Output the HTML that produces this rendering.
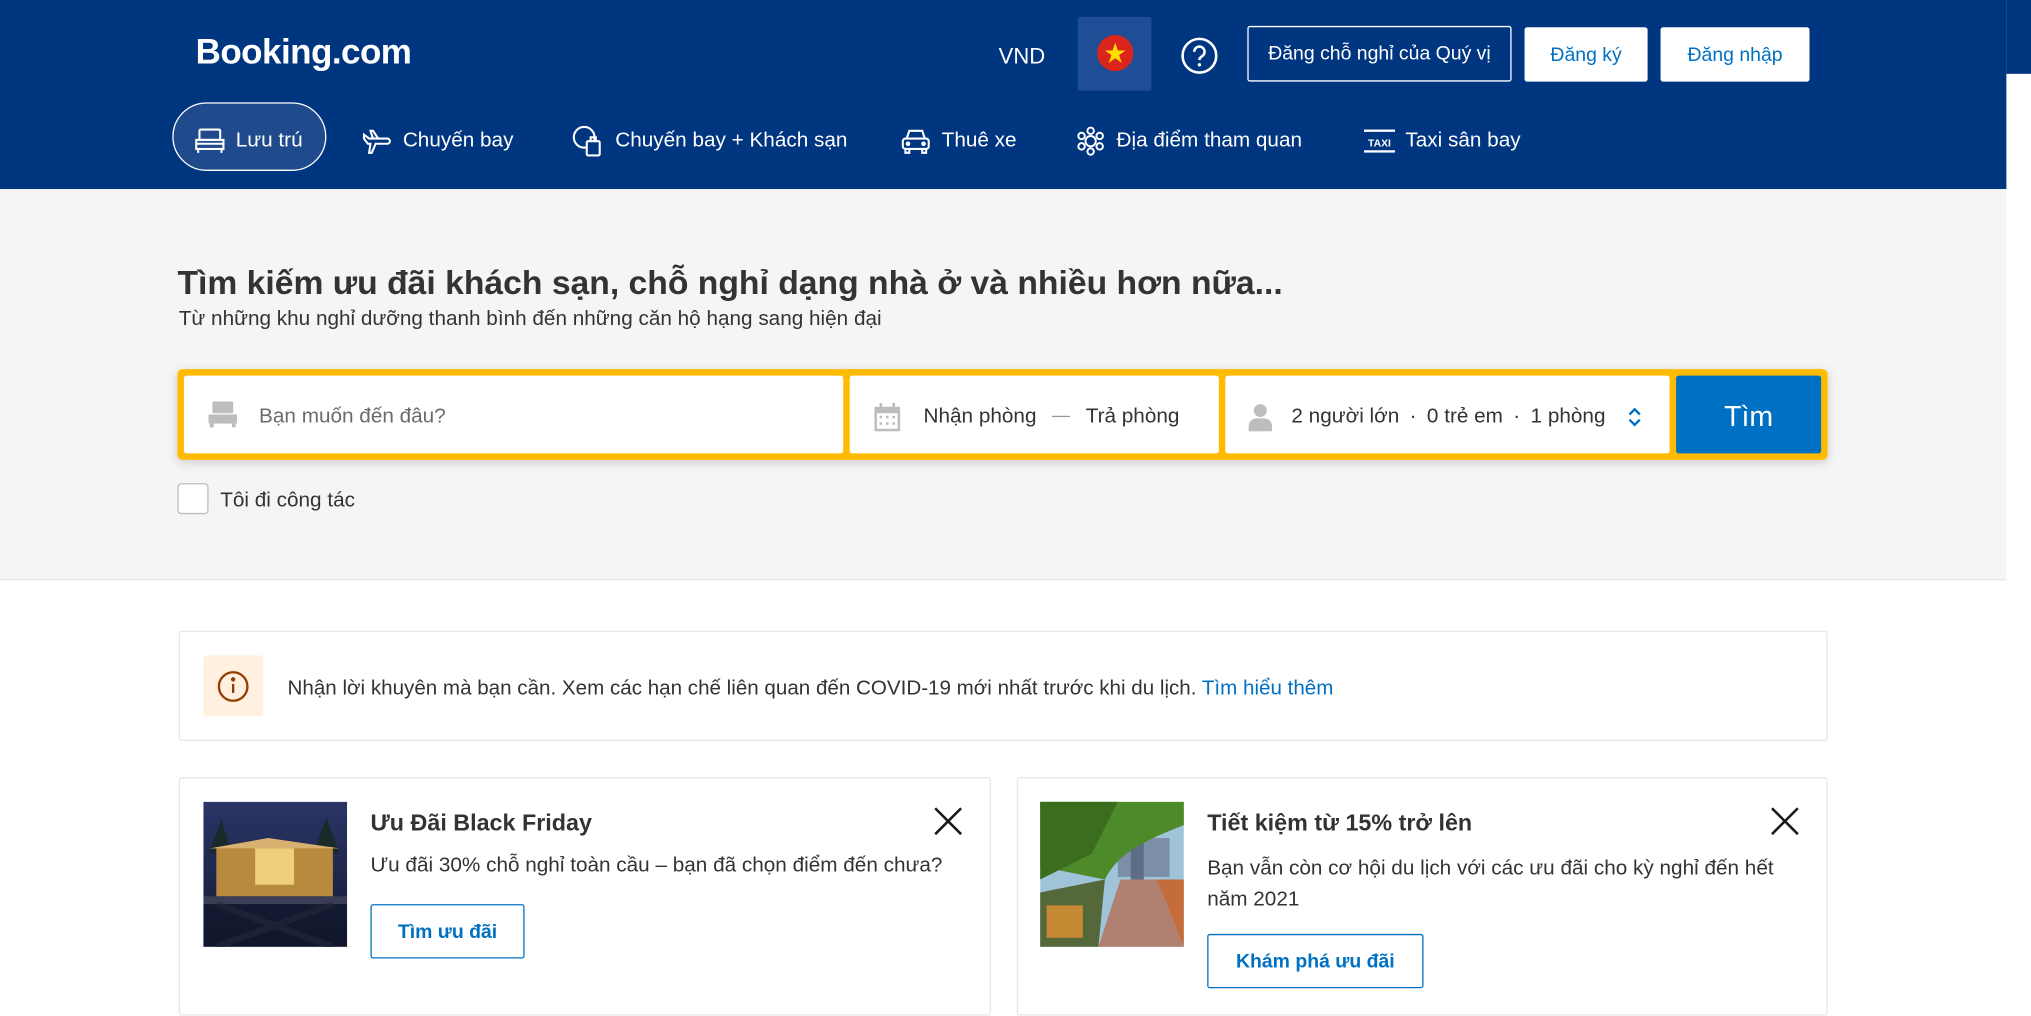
<!DOCTYPE html>
<html><head><meta charset="utf-8">
<style>
html,body{margin:0;padding:0;width:2031px;height:1015px;overflow:hidden;background:#fff}
#w{position:absolute;left:0;top:0;width:1568px;height:784px;transform:scale(1.29528);transform-origin:0 0;font-family:"Liberation Sans",sans-serif;color:#333}
.a{position:absolute}
.hdr{left:0;top:0;width:1549px;height:146px;background:#003580}
.strip{left:1549px;top:0;width:19px;height:57px;background:#003580}
.wt{color:#fff}
.btn{position:absolute;box-sizing:border-box;display:flex;align-items:center;justify-content:center;font-size:15px}
.nav{position:absolute;top:97px;height:24px;display:flex;align-items:center;color:#fff;font-size:16px}
.nav svg{margin-right:8px}
.fld{position:absolute;top:291px;height:60px;background:#fff;border-radius:2px;display:flex;align-items:center;font-size:16px}
.card{position:absolute;border:1px solid #e7e7e7;border-radius:2px;box-sizing:border-box;background:#fff}
.ob{position:absolute;border:1px solid #0071c2;border-radius:2px;box-sizing:border-box;color:#0071c2;font-weight:bold;font-size:15px;display:flex;align-items:center;justify-content:center}
</style></head><body><div id="w">
<div class="a hdr"></div><div class="a strip"></div>
<div class="a wt" style="left:151px;top:25px;font-size:27px;font-weight:bold;letter-spacing:-0.4px">Booking.com</div>
<div class="a wt" style="left:771px;top:34px;font-size:17px">VND</div>
<div class="a" style="left:832px;top:13px;width:57px;height:57px;background:#1f4e96;border-radius:2px"></div>
<svg class="a" style="left:847px;top:27px" width="28" height="28" viewBox="0 0 28 28"><circle cx="14" cy="14" r="14" fill="#da251d"/><polygon points="14,6 16,12 22,12 17,15.5 19,21.5 14,18 9,21.5 11,15.5 6,12 12,12" fill="#ffde00"/></svg>
<svg class="a" style="left:911px;top:28px" width="30" height="30" viewBox="0 0 30 30"><circle cx="15" cy="15" r="13" fill="none" stroke="#fff" stroke-width="2"/><path d="M11 12a4 4 0 1 1 6 3.4c-1.3.8-2 1.5-2 3" fill="none" stroke="#fff" stroke-width="2"/><circle cx="15" cy="22" r="1.3" fill="#fff"/></svg>
<div class="btn wt" style="left:963px;top:20px;width:204px;height:43px;border:1px solid #fff;border-radius:2px">Đăng chỗ nghỉ của Quý vị</div>
<div class="btn" style="left:1177px;top:21px;width:95px;height:42px;background:#fff;color:#0071c2;border-radius:2px">Đăng ký</div>
<div class="btn" style="left:1282px;top:21px;width:115px;height:42px;background:#fff;color:#0071c2;border-radius:2px">Đăng nhập</div>
<div class="a" style="left:133px;top:79px;width:119px;height:53px;box-sizing:border-box;border:1px solid #fff;border-radius:27px;background:#1f4a8c"></div>
<div class="nav" style="left:150px"><svg width="24" height="22" viewBox="0 0 24 22" fill="none" stroke="#fff" stroke-width="1.6"><rect x="4" y="2" width="16" height="8" rx="1"/><rect x="1.5" y="10" width="21" height="7"/><path d="M3 17v3M21 17v3M1.5 13h21"/></svg>Lưu trú</div>
<div class="nav" style="left:279px"><svg width="24" height="22" viewBox="0 0 24 22" fill="none" stroke="#fff" stroke-width="1.6"><path d="M2 6l4 3h14a2 2 0 0 1 0 4h-9l-3 7h-2l1-7H5L2 9z M9 9l-2-6h2l4 6"/></svg>Chuyến bay</div>
<div class="nav" style="left:441px"><svg width="26" height="24" viewBox="0 0 26 24" fill="none" stroke="#fff" stroke-width="1.6"><circle cx="10" cy="9" r="8"/><rect x="12" y="12" width="10" height="11" rx="1" fill="#003580"/><path d="M15 12V9h4v3"/></svg>Chuyến bay + Khách sạn</div>
<div class="nav" style="left:695px"><svg width="24" height="22" viewBox="0 0 24 22" fill="none" stroke="#fff" stroke-width="1.6"><path d="M5 9l2-6h10l2 6"/><rect x="2" y="9" width="20" height="8" rx="2"/><path d="M4 17v3h3v-3M17 17v3h3v-3"/><circle cx="6" cy="13" r="1"/><circle cx="18" cy="13" r="1"/></svg>Thuê xe</div>
<div class="nav" style="left:830px"><svg width="24" height="24" viewBox="0 0 24 24" fill="none" stroke="#fff" stroke-width="1.5"><circle cx="12" cy="12" r="4"/><circle cx="12" cy="4" r="2.5"/><circle cx="12" cy="20" r="2.5"/><circle cx="5" cy="8" r="2.5"/><circle cx="19" cy="8" r="2.5"/><circle cx="5" cy="16" r="2.5"/><circle cx="19" cy="16" r="2.5"/></svg>Địa điểm tham quan</div>
<div class="nav" style="left:1053px"><svg width="24" height="22" viewBox="0 0 24 22"><rect x="0" y="2" width="24" height="1.8" fill="#fff"/><rect x="0" y="18" width="24" height="1.8" fill="#fff"/><text x="12" y="15" font-size="8" font-family="Liberation Sans" font-weight="bold" fill="#fff" text-anchor="middle">TAXI</text></svg>Taxi sân bay</div>

<div class="a" style="left:0;top:146px;width:1549px;height:301px;background:#f5f5f5;border-bottom:1px solid #e7e7e7"></div>
<div class="a" style="left:137px;top:203px;font-size:26px;font-weight:bold;color:#333">Tìm kiếm ưu đãi khách sạn, chỗ nghỉ dạng nhà ở và nhiều hơn nữa...</div>
<div class="a" style="left:138px;top:238px;font-size:16px;color:#333">Từ những khu nghỉ dưỡng thanh bình đến những căn hộ hạng sang hiện đại</div>
<div class="a" style="left:137px;top:285px;width:1274px;height:70px;background:#febb02;border-radius:4px;box-shadow:0 2px 8px rgba(0,0,0,.16)"></div>
<div class="fld" style="left:142px;width:509px;top:290px"><svg style="margin:0 16px 0 18px" width="24" height="22" viewBox="0 0 24 22" fill="#bdbdbd"><rect x="4" y="1" width="16" height="9" rx="1"/><rect x="1" y="11" width="22" height="7"/><rect x="2" y="18" width="3" height="3"/><rect x="19" y="18" width="3" height="3"/></svg><span style="color:#6b6b6b;margin-top:3px">Bạn muốn đến đâu?</span></div>
<div class="fld" style="left:656px;width:285px;top:290px;padding-top:3px;box-sizing:border-box"><svg style="margin:0 18px 0 19px" width="20" height="22" viewBox="0 0 20 22" fill="#bdbdbd"><rect x="0" y="3" width="20" height="19" rx="1"/><rect x="2" y="8" width="16" height="12" fill="#fff"/><rect x="4" y="0" width="2" height="5"/><rect x="14" y="0" width="2" height="5"/><g fill="#bdbdbd"><rect x="4" y="10" width="2" height="2"/><rect x="9" y="10" width="2" height="2"/><rect x="14" y="10" width="2" height="2"/><rect x="4" y="15" width="2" height="2"/><rect x="9" y="15" width="2" height="2"/><rect x="14" y="15" width="2" height="2"/></g></svg>Nhận phòng<span style="display:inline-block;width:14px;height:1px;background:#999;margin:0 12px"></span>Trả phòng</div>
<div class="fld" style="left:946px;width:343px;top:290px;padding-top:3px;box-sizing:border-box"><svg style="margin:0 14px 0 17px" width="20" height="22" viewBox="0 0 20 22" fill="#bdbdbd"><circle cx="10" cy="6" r="5"/><path d="M1 22v-4a6 6 0 0 1 6-6h6a6 6 0 0 1 6 6v4z"/></svg>2 người lớn<span style="margin:0 8px">·</span>0 trẻ em<span style="margin:0 8px">·</span>1 phòng<svg style="margin-left:17px" width="12" height="18" viewBox="0 0 12 18" fill="none" stroke="#0071c2" stroke-width="1.8"><path d="M2 7l4-4 4 4M2 11l4 4 4-4"/></svg></div>
<div class="btn" style="left:1294px;top:290px;width:112px;height:60px;background:#0071c2;color:#fff;font-size:22px;border-radius:2px;padding-top:3px">Tìm</div>
<div class="a" style="left:137px;top:373px;width:24px;height:24px;box-sizing:border-box;border:1px solid #bdbdbd;border-radius:3px;background:#fff"></div>
<div class="a" style="left:170px;top:378px;font-size:16px">Tôi đi công tác</div>

<div class="card" style="left:138px;top:487px;width:1273px;height:85px"></div>
<div class="a" style="left:157px;top:506px;width:46px;height:47px;background:#fff0e0;border-radius:2px"></div>
<svg class="a" style="left:167px;top:517px" width="26" height="26" viewBox="0 0 26 26" fill="none" stroke="#923e01" stroke-width="1.8"><circle cx="13" cy="13" r="11"/><path d="M13 11v7"/><circle cx="13" cy="7.5" r=".8" fill="#923e01"/></svg>
<div class="a" style="left:222px;top:523px;font-size:15.9px">Nhận lời khuyên mà bạn cần. Xem các hạn chế liên quan đến COVID-19 mới nhất trước khi du lịch. <span style="color:#0071c2">Tìm hiểu thêm</span></div>

<div class="card" style="left:138px;top:600px;width:627px;height:184px"></div>
<svg class="a" style="left:157px;top:619px" width="111" height="112" viewBox="0 0 111 112"><defs><linearGradient id="g1" x1="0" y1="0" x2="0" y2="1"><stop offset="0" stop-color="#2a3566"/><stop offset="1" stop-color="#141a33"/></linearGradient></defs><rect width="111" height="112" fill="url(#g1)"/><polygon points="4,40 14,14 22,40" fill="#1a2a2a"/><polygon points="85,40 95,12 105,40" fill="#1a2a2a"/><rect x="10" y="35" width="90" height="38" fill="#b88a3e"/><rect x="40" y="36" width="30" height="28" fill="#f0cf7a"/><polygon points="5,36 50,28 105,36" fill="#d8b070"/><rect x="0" y="73" width="111" height="6" fill="#3a3f55"/><path d="M10 79 L100 112 M100 79 L10 112" stroke="#2e3247" stroke-width="5"/><rect x="0" y="79" width="111" height="33" fill="#0f1424" opacity=".55"/></svg>
<div class="a" style="left:286px;top:625px;font-size:18px;font-weight:bold">Ưu Đãi Black Friday</div>
<svg class="a" style="left:721px;top:623px" width="22" height="22" viewBox="0 0 22 22" stroke="#1a1a1a" stroke-width="2"><path d="M1 1l20 20M21 1L1 21"/></svg>
<div class="a" style="left:286px;top:660px;font-size:16px">Ưu đãi 30% chỗ nghỉ toàn cầu – bạn đã chọn điểm đến chưa?</div>
<div class="ob" style="left:286px;top:698px;width:119px;height:42px">Tìm ưu đãi</div>

<div class="card" style="left:785px;top:600px;width:626px;height:184px"></div>
<svg class="a" style="left:803px;top:619px" width="111" height="112" viewBox="0 0 111 112"><rect width="111" height="112" fill="#9fc3d8"/><rect x="60" y="28" width="40" height="30" fill="#7d8ea8"/><rect x="70" y="20" width="10" height="40" fill="#5d6d88"/><path d="M0 0h111v18C80 30 60 40 50 60L0 50z" fill="#4d8a2a"/><path d="M0 0h60L40 40 0 60z" fill="#3a6e1e"/><polygon points="45,112 111,112 90,60 62,60" fill="#b08070"/><polygon points="90,60 111,60 111,112" fill="#c46d3a"/><polygon points="0,70 50,60 45,112 0,112" fill="#55683a"/><rect x="5" y="80" width="28" height="25" fill="#c68a35"/></svg>
<div class="a" style="left:932px;top:625px;font-size:18px;font-weight:bold">Tiết kiệm từ 15% trở lên</div>
<svg class="a" style="left:1367px;top:623px" width="22" height="22" viewBox="0 0 22 22" stroke="#1a1a1a" stroke-width="2"><path d="M1 1l20 20M21 1L1 21"/></svg>
<div class="a" style="left:932px;top:659px;font-size:16px;line-height:24px;width:440px">Bạn vẫn còn cơ hội du lịch với các ưu đãi cho kỳ nghỉ đến hết năm 2021</div>
<div class="ob" style="left:932px;top:721px;width:167px;height:42px">Khám phá ưu đãi</div>
</div></body></html>
